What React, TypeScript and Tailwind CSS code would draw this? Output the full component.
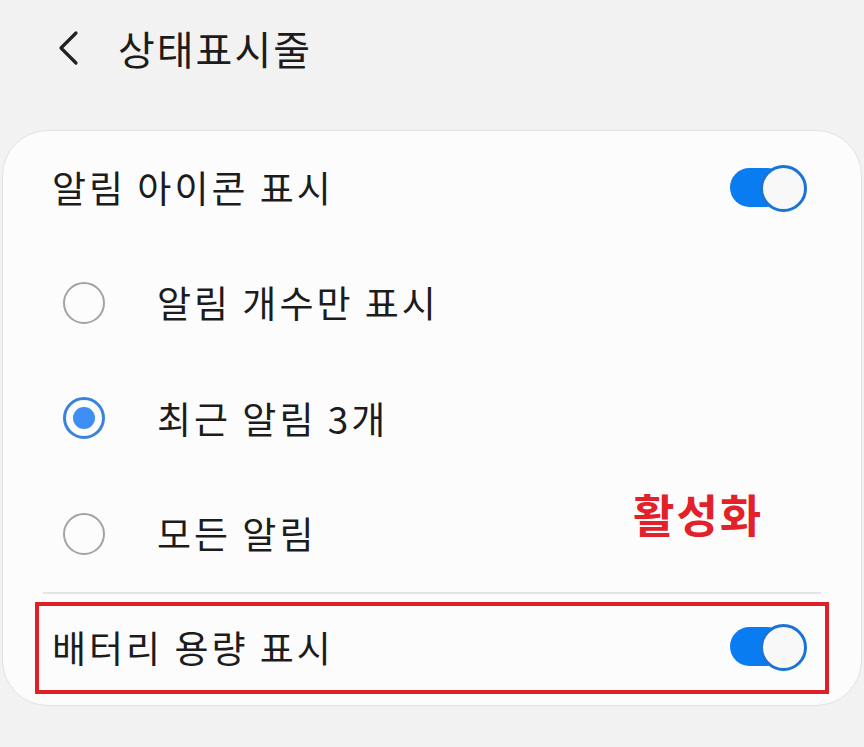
import React from 'react';

const font = { fontFamily: '"Noto Sans CJK KR", "Noto Sans", sans-serif' };

function Toggle() {
  return (
    <div className="relative h-[47px] w-[77px] shrink-0">
      <div className="absolute left-0 top-[3px] h-[39px] w-[56px] rounded-full bg-[#0a7cf2]" />
      <div className="absolute right-0 top-0 h-[47px] w-[47px] rounded-full border-[3px] border-[#1a73d6] bg-[#f8f8f8]" />
    </div>
  );
}

function Radio({ checked }: { checked?: boolean }) {
  if (checked) {
    return (
      <div className="flex h-[42px] w-[42px] shrink-0 items-center justify-center rounded-full border-[3px] border-[#3b82dd]">
        <div className="h-[22px] w-[22px] rounded-full bg-[#3d8ef5]" />
      </div>
    );
  }
  return <div className="h-[42px] w-[42px] shrink-0 rounded-full border-2 border-[#a3a3a3]" />;
}

export default function App() {
  const options = [
    { label: '알림 개수만 표시', checked: false },
    { label: '최근 알림 3개', checked: true },
    { label: '모든 알림', checked: false },
  ];

  return (
    <div className="h-[747px] w-[864px] overflow-hidden bg-[#f2f2f2] text-[#1c1c1c]" style={font}>
      {/* header */}
      <div className="flex h-[130px] items-start pt-[22px]">
        <svg className="ml-[56px] mt-[8px]" width="24" height="36" viewBox="0 0 24 36" fill="none">
          <path d="M20 3 L5 18 L20 33" stroke="#222" strokeWidth="3.2" strokeLinecap="round" strokeLinejoin="round" />
        </svg>
        <h1 className="ml-[38px] text-[40px] leading-[52px] font-normal tracking-[2px]">상태표시줄</h1>
      </div>

      {/* card */}
      <div className="relative mx-[2px] h-[576px] rounded-[46px] border border-[#e2e2e2] bg-[#fcfcfc]">
        <div className="flex h-[114px] items-center justify-between pl-[49px] pr-[54px]">
          <span className="text-[37px] tracking-[3px]">알림 아이콘 표시</span>
          <Toggle />
        </div>

        {options.map((o) => (
          <div key={o.label} className="flex h-[115.5px] items-center pl-[60px]">
            <Radio checked={o.checked} />
            <span className="ml-[52px] text-[37px] tracking-[3px]">{o.label}</span>
          </div>
        ))}

        <span className="absolute left-[630px] top-[349px] text-[45px] font-bold tracking-[2px] text-[#e3212b]">활성화</span>

        <div className="mx-[40px] h-[2px] bg-[#e4e4e4]" />

        <div className="px-[32px] pt-[8px]">
          <div className="flex h-[92px] items-center justify-between border-4 border-[#e01f27] pl-[13px] pr-[18px]">
            <span className="text-[37px] tracking-[3px]">배터리 용량 표시</span>
            <Toggle />
          </div>
        </div>
      </div>
    </div>
  );
}
